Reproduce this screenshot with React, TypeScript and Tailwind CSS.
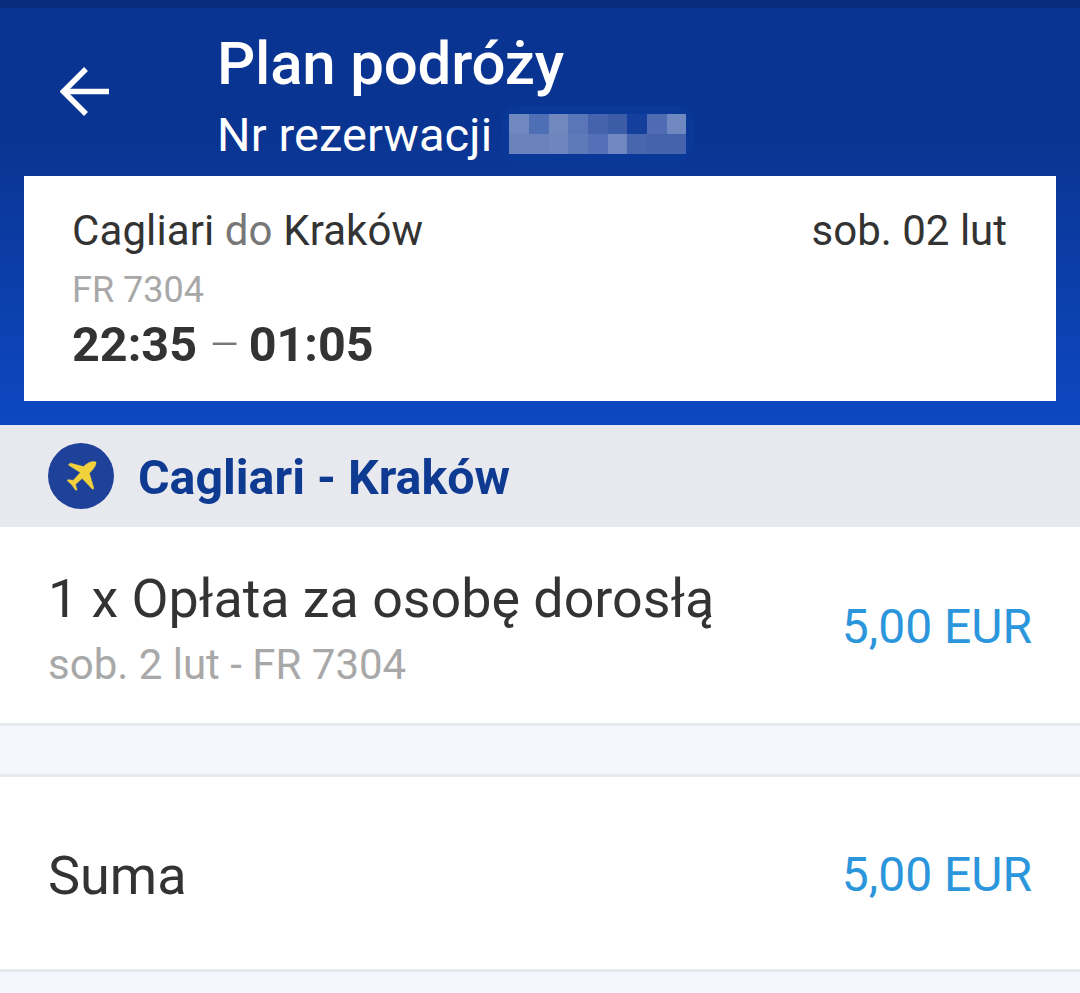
const blurTop = ['#7088c0', '#4f6fb5', '#7088be', '#5a76b8', '#4563ac', '#3d5ca8', '#153f9c', '#4f6cb2', '#6f88c0'];
const blurBottom = ['#6a82bc', '#6a82bc', '#6e86bf', '#5f7ab9', '#5570b6', '#7088bf', '#4766ae', '#4463ac', '#4463ac'];

function Blur({ colors }: { colors: string[] }) {
  return (
    <div className="flex h-[20px]">
      {colors.map((c, i) => (
        <div key={i} className="w-[19.7px] flex-none" style={{ backgroundColor: c }} />
      ))}
    </div>
  );
}

function BackArrow() {
  return (
    <svg viewBox="0 0 50 50" className="w-[50px] h-[50px]" fill="none" stroke="white" strokeWidth="5.5">
      <path d="M49 24.5H4" />
      <path d="M26 2L3.5 24.5L26 47" />
    </svg>
  );
}

function PlaneBadge() {
  return (
    <div className="w-[66px] h-[66px] rounded-full bg-[#1e419a] flex items-center justify-center">
      <svg viewBox="100 90 100 100" className="w-[33px] h-[33px]" fill="#f1d23c" stroke="#f1d23c" strokeWidth="1" strokeLinejoin="round">
        <path d="M194 96 C196 106 186 118 174 130 L188 176 L183 179 L152 146 L132 164 L137 181 L132 182 L120 165 L107 153 L109 149 L125 151 L146 128 L110 105 L116 99 L156 110 C168 98 182 92 194 96 Z" />
      </svg>
    </div>
  );
}

export default function App() {
  return (
    <div className="w-[1080px] h-[993px] overflow-hidden bg-[#f4f7fe] font-['Roboto',sans-serif] text-[#333333]">
      <div className="h-[8px] bg-[#082c7a]" />
      <div className="h-[417px] px-[24px] bg-gradient-to-b from-[#0a3491] from-30% to-[#0d48c2]">
        <div className="h-[168px] flex">
          <div className="w-[193px] pl-[36px] pt-[59px]">
            <BackArrow />
          </div>
          <div className="text-white">
            <div className="text-[60px] leading-[70px] font-medium pt-[21px] tracking-[-0.2px]">Plan podróży</div>
            <div className="flex items-start gap-[9px] mt-[8px]">
              <div className="text-[47px] leading-[56px] tracking-[0.1px]">Nr rezerwacji</div>
              <div className="rounded-[16px] bg-[#0a3899] p-[8px] -mt-[1px]">
                <Blur colors={blurTop} />
                <Blur colors={blurBottom} />
              </div>
            </div>
          </div>
        </div>
        <div className="h-[225px] bg-white pl-[48px] pr-[49px] pt-[30px]">
          <div className="flex justify-between text-[42px] leading-[50px]">
            <div className="tracking-[0.1px]">
              Cagliari <span className="text-[#777777]">do</span> Kraków
            </div>
            <div>sob. 02 lut</div>
          </div>
          <div className="text-[36px] leading-[42px] text-[#a8a8a8] mt-[13px]">FR 7304</div>
          <div className="text-[48.5px] leading-[56px] font-bold mt-[6px]">
            22:35 <span className="font-light text-[#777777] tracking-[-4px]">–</span> 01:05
          </div>
        </div>
      </div>
      <div className="h-[102px] bg-[#e8e9ef] pl-[48px] flex items-center gap-[24px]">
        <PlaneBadge />
        <div className="text-[48.3px] leading-[56px] mt-[4px] font-bold text-[#0f3a92]">Cagliari - Kraków</div>
      </div>
      <div className="h-[199px] bg-white border-b-[3px] border-[#e8e9ec] px-[48px] flex items-center justify-between">
        <div className="mt-[6px]">
          <div className="text-[53.8px] leading-[64px]">1 x Opłata za osobę dorosłą</div>
          <div className="text-[42px] leading-[50px] text-[#a8a8a8] mt-[9px]">sob. 2 lut - FR 7304</div>
        </div>
        <div className="text-[48px] leading-[56px] text-[#2b96dc] mt-[4px]">5,00 EUR</div>
      </div>
      <div className="h-[48px]" />
      <div className="h-[198px] bg-white border-y-[3px] border-[#e8e9ec] px-[48px] flex items-center justify-between">
        <div className="text-[54px] leading-[64px] mt-[6px]">Suma</div>
        <div className="text-[48px] leading-[56px] text-[#2b96dc] mt-[4px]">5,00 EUR</div>
      </div>
    </div>
  );
}
